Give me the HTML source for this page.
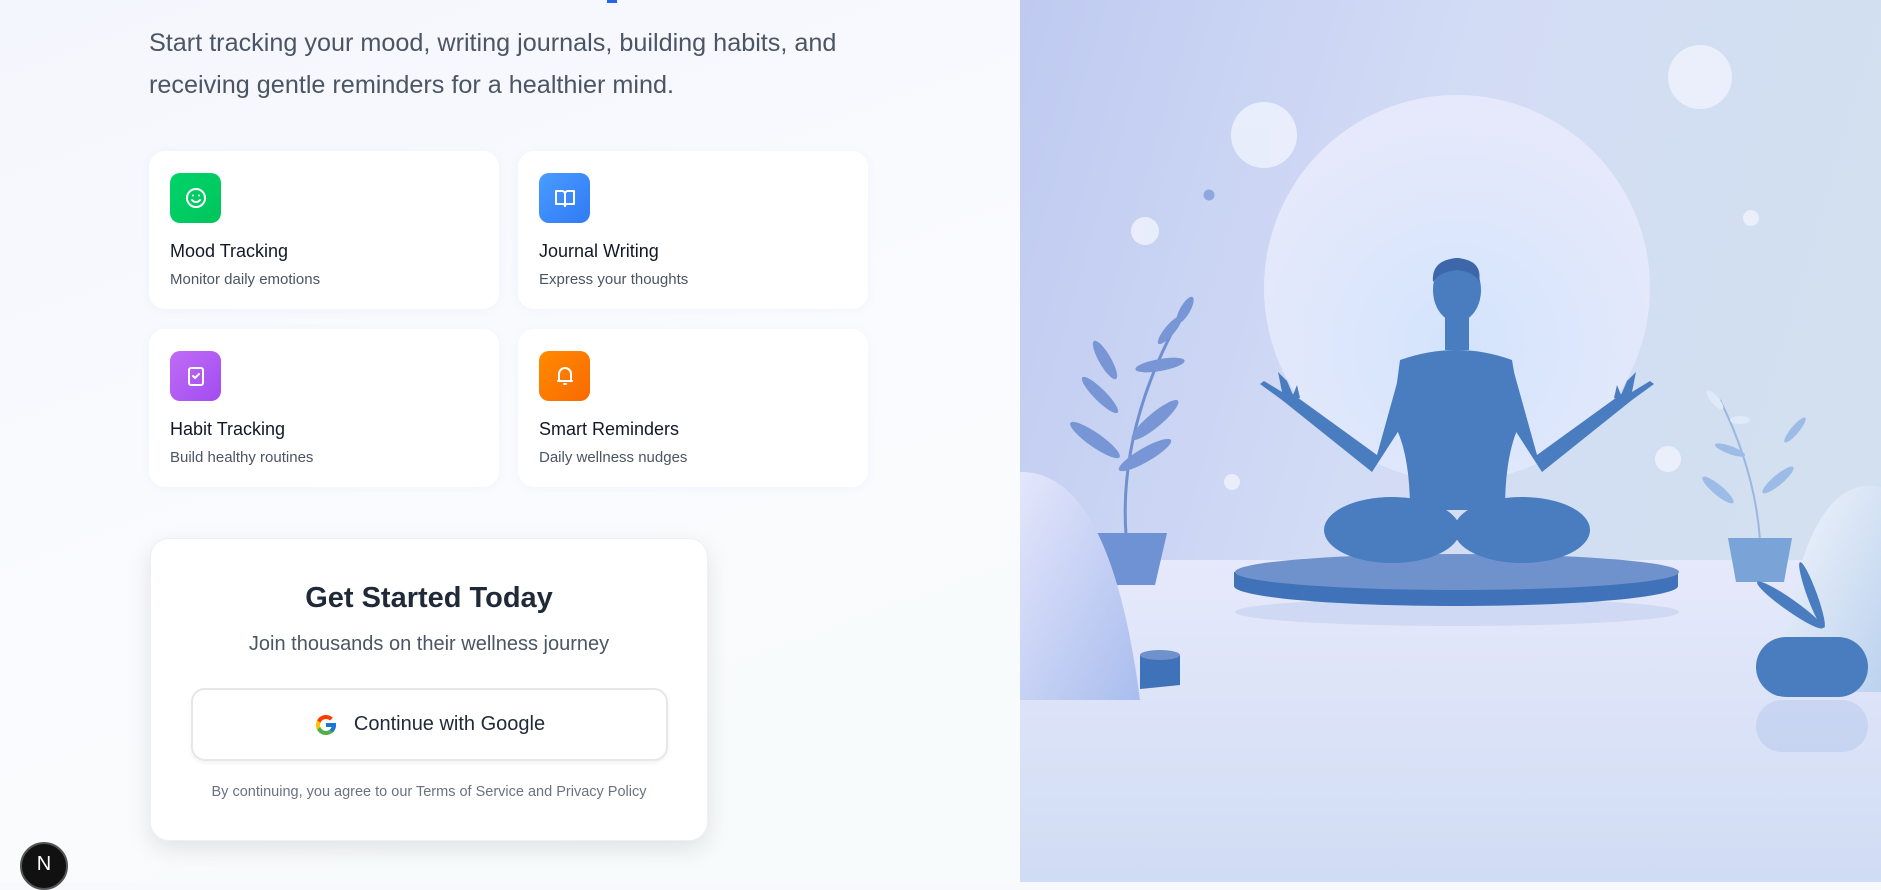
<!DOCTYPE html>
<html><head><meta charset="utf-8"><style>
*{margin:0;padding:0;box-sizing:border-box}
body{width:1881px;height:882px;overflow:hidden;font-family:"Liberation Sans",sans-serif;background:#f7f9fd;position:relative}
.left{position:absolute;left:0;top:0;width:1020px;height:882px;background:linear-gradient(160deg,#f4f6fd 0%,#fafbfe 50%,#f7fbfb 100%)}
.sub{position:absolute;left:149px;top:22px;font-size:25.2px;line-height:42px;color:#4b5563;width:760px}
.card{position:absolute;width:350px;height:158px;background:#fff;border-radius:16px;box-shadow:0 2px 10px rgba(100,120,180,.05)}
.ic{position:absolute;left:21px;top:22px;width:51px;height:50px;border-radius:10px;display:flex;align-items:center;justify-content:center}
.ct{position:absolute;left:21px;top:90px;font-size:18px;color:#111827}
.cs{position:absolute;left:21px;top:120px;font-size:15px;color:#4b5563}
.gs{position:absolute;left:150px;top:538px;width:558px;height:303px;background:#fff;border-radius:19px;box-shadow:0 8px 24px rgba(0,0,0,.10);border:1px solid #eef0f3;text-align:center}
.gs h2{position:absolute;top:43px;width:100%;font-size:29px;color:#1f2937;font-weight:bold}
.gs p{position:absolute;top:94px;width:100%;font-size:20px;color:#4b5563}
.btn{position:absolute;left:40px;top:149px;width:477px;height:73px;border:2px solid #e5e7eb;border-radius:14px;display:flex;align-items:center;justify-content:center;font-size:20px;color:#1f2937;box-shadow:0 2px 4px rgba(0,0,0,.05)}
.terms{position:absolute;top:245px;width:100%;font-size:14.5px;color:#6b7280}
.n{position:absolute;left:20px;top:842px;width:48px;height:48px;border-radius:50%;background:#111;color:#fff;border:2px solid #555;display:flex;align-items:center;justify-content:center;font-size:20px;padding-bottom:4px}
</style></head><body>
<div class="left">
<div style="position:absolute;left:607px;top:0;width:10px;height:3px;background:#2563eb"></div>
<div class="sub">Start tracking your mood, writing journals, building habits, and receiving gentle reminders for a healthier mind.</div>

<div class="card" style="left:149px;top:151px">
<div class="ic" style="background:linear-gradient(135deg,#00d46a,#00c45a)"><svg width="24" height="24" viewBox="0 0 24 24" fill="none" stroke="#fff" stroke-width="2" stroke-linecap="round"><circle cx="12" cy="12" r="9"/><path d="M8 14s1.5 2 4 2 4-2 4-2"/><path d="M9 9.5h.01M15 9.5h.01"/></svg></div>
<div class="ct">Mood Tracking</div><div class="cs">Monitor daily emotions</div></div>

<div class="card" style="left:518px;top:151px">
<div class="ic" style="background:linear-gradient(135deg,#4a9bff,#2f7bf5)"><svg width="24" height="24" viewBox="0 0 24 24" fill="none" stroke="#fff" stroke-width="2" stroke-linejoin="round"><path d="M3 5h6a3 3 0 0 1 3 3v12a2 2 0 0 0-2-2H3z"/><path d="M21 5h-6a3 3 0 0 0-3 3v12a2 2 0 0 1 2-2h7z"/></svg></div>
<div class="ct">Journal Writing</div><div class="cs">Express your thoughts</div></div>

<div class="card" style="left:149px;top:329px">
<div class="ic" style="background:linear-gradient(135deg,#c06cf5,#a24cf2)"><svg width="24" height="24" viewBox="0 0 24 24" fill="none" stroke="#fff" stroke-width="2" stroke-linecap="round" stroke-linejoin="round"><rect x="5" y="4" width="14" height="17" rx="2"/><path d="M9 12l2 2 4-4"/></svg></div>
<div class="ct">Habit Tracking</div><div class="cs">Build healthy routines</div></div>

<div class="card" style="left:518px;top:329px">
<div class="ic" style="background:linear-gradient(135deg,#ff8a00,#f96a00)"><svg width="24" height="24" viewBox="0 0 24 24" fill="none" stroke="#fff" stroke-width="2" stroke-linecap="round" stroke-linejoin="round"><path d="M6 17V10a6 6 0 0 1 12 0v7z"/><path d="M5 17h14M11 20h2"/></svg></div>
<div class="ct">Smart Reminders</div><div class="cs">Daily wellness nudges</div></div>

<div class="gs">
<h2>Get Started Today</h2>
<p>Join thousands on their wellness journey</p>
<div class="btn"><svg width="24" height="24" viewBox="0 0 48 48" style="margin-right:16px"><path fill="#FFC107" d="M43.6 20.1H42V20H24v8h11.3C33.7 32.7 29.2 36 24 36c-6.6 0-12-5.4-12-12s5.4-12 12-12c3.1 0 5.8 1.2 7.9 3.1l5.7-5.7C34 6.1 29.3 4 24 4 12.9 4 4 12.9 4 24s8.9 20 20 20 20-8.9 20-20c0-1.3-.1-2.6-.4-3.900z"/><path fill="#FF3D00" d="M6.3 14.7l6.6 4.8C14.7 15.1 19 12 24 12c3.1 0 5.8 1.2 7.9 3.1l5.7-5.7C34 6.1 29.3 4 24 4 16.3 4 9.7 8.3 6.3 14.7z"/><path fill="#4CAF50" d="M24 44c5.2 0 9.9-2 13.4-5.2l-6.2-5.2C29.2 35.1 26.7 36 24 36c-5.2 0-9.6-3.3-11.3-8l-6.5 5C9.5 39.6 16.2 44 24 44z"/><path fill="#1976D2" d="M43.6 20.1H42V20H24v8h11.3c-.8 2.2-2.2 4.2-4.1 5.6l6.2 5.2C37 39.2 44 34 44 24c0-1.3-.1-2.6-.4-3.9z"/></svg>Continue with Google</div>
<div class="terms">By continuing, you agree to our Terms of Service and Privacy Policy</div>
</div>
<div class="n">N</div>
</div>

<svg style="position:absolute;left:1020px;top:0" width="861" height="882" viewBox="1020 0 861 882">
<defs>
<linearGradient id="bg" x1="0" y1="0" x2="1" y2="0.3"><stop offset="0" stop-color="#bfcaf1"/><stop offset=".5" stop-color="#d3dcf5"/><stop offset="1" stop-color="#d2e0ef"/></linearGradient>
<linearGradient id="fl" x1="0" y1="0" x2="0" y2="1"><stop offset="0" stop-color="#e6e9fb"/><stop offset="1" stop-color="#d0dcf4"/></linearGradient>
<radialGradient id="moon" cx=".5" cy=".65" r=".6"><stop offset="0" stop-color="#d3e4fc"/><stop offset="1" stop-color="#e6e9fb"/></radialGradient>
<linearGradient id="hill" x1="0" y1="0" x2="1" y2="1"><stop offset="0" stop-color="#e4e6fb"/><stop offset="1" stop-color="#a9bdee"/></linearGradient>
<linearGradient id="hill2" x1="0" y1="0" x2="1" y2="1"><stop offset="0" stop-color="#f3f6fc"/><stop offset="1" stop-color="#bcd2ee"/></linearGradient>
</defs>
<rect x="1020" y="0" width="861" height="882" fill="url(#bg)"/>
<rect x="1020" y="560" width="861" height="322" fill="url(#fl)"/>
<circle cx="1457" cy="288" r="193" fill="url(#moon)"/>
<g fill="#eef2fd" opacity=".85">
<circle cx="1264" cy="135" r="33"/><circle cx="1700" cy="77" r="32"/><circle cx="1145" cy="231" r="14"/><circle cx="1751" cy="218" r="8"/><circle cx="1668" cy="459" r="13"/><circle cx="1232" cy="482" r="8"/></g>
<circle cx="1209" cy="195" r="5.5" fill="#8fa8e0"/>
<ellipse cx="1457" cy="612" rx="222" ry="14" fill="#c8d3f0" opacity=".7"/>
<path d="M1234 572 v14 a222 20 0 0 0 444 0 v-14z" fill="#3f72b8"/>
<ellipse cx="1457" cy="572" rx="222" ry="18" fill="#6f92cd"/>
<g fill="#4a7cc0">
<ellipse cx="1392" cy="530" rx="68" ry="33"/><ellipse cx="1522" cy="530" rx="68" ry="33"/>
<path d="M1400 360 Q1457 340 1512 360 L1522 420 Q1505 450 1505 510 L1410 510 Q1410 450 1392 420z"/>
<rect x="1445" y="300" width="24" height="50"/>
<ellipse cx="1457" cy="290" rx="24" ry="32"/>
<path d="M1402 365 L1377 455 L1290 392 L1282 400 L1372 472 L1412 410z"/>
<path d="M1512 365 L1537 455 L1624 392 L1632 400 L1542 472 L1502 410z"/>
<path d="M1282 400 l-22 -16 l4 -3 l18 11 l-4 -20 l9 9 l6 14 l4 -10 l3 13z"/>
<path d="M1632 400 l22 -16 l-4 -3 l-18 11 l4 -20 l-9 9 l-6 14 l-4 -10 l-3 13z"/>
</g>
<path d="M1433 282 q-2 -22 24 -24 q26 2 22 24 q-4 -10 -22 -12 q-18 2 -24 12z" fill="#3d67a8"/>
<g stroke="#6f8fd0" stroke-width="3" fill="none"><path d="M1126 535 Q1118 420 1190 300"/></g>
<g fill="#7896d6">
<ellipse cx="1095" cy="440" rx="30" ry="7" transform="rotate(35 1095 440)"/><ellipse cx="1155" cy="420" rx="30" ry="7" transform="rotate(-40 1155 420)"/>
<ellipse cx="1100" cy="395" rx="25" ry="6" transform="rotate(45 1100 395)"/><ellipse cx="1160" cy="365" rx="25" ry="6" transform="rotate(-10 1160 365)"/>
<ellipse cx="1105" cy="360" rx="22" ry="6" transform="rotate(60 1105 360)"/><ellipse cx="1170" cy="330" rx="18" ry="5" transform="rotate(-50 1170 330)"/>
<ellipse cx="1185" cy="310" rx="15" ry="5" transform="rotate(-60 1185 310)"/><ellipse cx="1145" cy="455" rx="30" ry="7" transform="rotate(-30 1145 455)"/></g>
<path d="M1097 533 h70 l-12 52 h-46z" fill="#6e92d4"/>
<path d="M1020 472 Q1110 470 1140 700 L1020 700z" fill="url(#hill)"/>
<path d="M1140 655 h40 v30 l-40 4z" fill="#3f72b8"/><ellipse cx="1160" cy="655" rx="20" ry="5" fill="#6f92cd"/>
<g stroke="#9ab7e2" stroke-width="2" fill="none"><path d="M1760 540 Q1755 470 1720 400"/></g>
<g fill="#9cbbe6"><ellipse cx="1718" cy="490" rx="20" ry="5" transform="rotate(40 1718 490)"/><ellipse cx="1778" cy="480" rx="20" ry="5" transform="rotate(-40 1778 480)"/><ellipse cx="1730" cy="450" rx="16" ry="4" transform="rotate(20 1730 450)"/><ellipse cx="1795" cy="430" rx="16" ry="4" transform="rotate(-50 1795 430)"/></g>
<g fill="#dfe9f8"><ellipse cx="1715" cy="400" rx="12" ry="4" transform="rotate(50 1715 400)"/><ellipse cx="1740" cy="420" rx="10" ry="4"/></g>
<path d="M1728 538 h64 l-8 44 h-48z" fill="#7aa3d8"/>
<path d="M1881 487 Q1800 470 1778 692 L1881 692z" fill="url(#hill2)"/>
<g fill="#4a7cc0"><ellipse cx="1790" cy="605" rx="40" ry="6" transform="rotate(35 1790 605)"/><ellipse cx="1812" cy="595" rx="35" ry="5" transform="rotate(70 1812 595)"/></g>
<rect x="1756" y="637" width="112" height="60" rx="30" fill="#4a7cc0"/>
<rect x="1756" y="700" width="112" height="52" rx="26" fill="#b5c8ec" opacity=".5"/>
</svg>
</body></html>
